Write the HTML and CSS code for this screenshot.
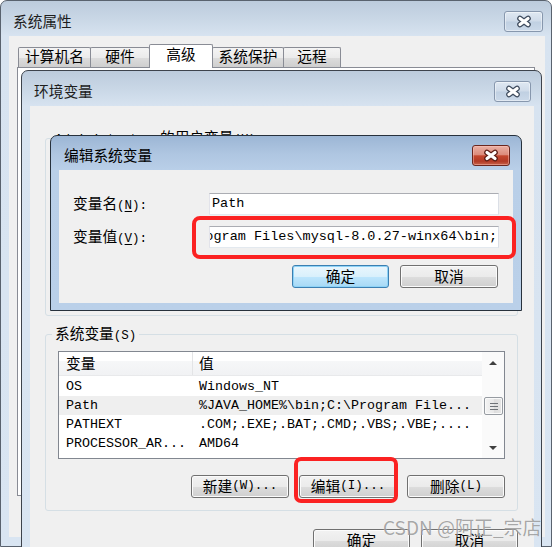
FILE: index.html
```html
<!DOCTYPE html>
<html lang="zh-CN">
<head>
<meta charset="utf-8">
<title>系统属性</title>
<link rel="stylesheet" href="styles.css">
</head>
<body>
<section class="win inactive outer">
  <header class="titlebar">
    <span class="title">系统属性</span>
    <span class="close w39"><svg width="16" height="13" viewBox="0 0 16 13"><path d="M4 3.5 L12 9.5 M12 3.5 L4 9.5" stroke="#3d4a5c" stroke-width="5.6" stroke-linecap="round" fill="none"/><path d="M4 3.5 L12 9.5 M12 3.5 L4 9.5" stroke="#fff" stroke-width="3.2" stroke-linecap="round" fill="none"/></svg></span>
  </header>
  <div class="client outer-client">
    <nav class="tabs">
      <span class="tab t1">计算机名</span>
      <span class="tab t2">硬件</span>
      <span class="tab sel t3">高级</span>
      <span class="tab t4">系统保护</span>
      <span class="tab t5">远程</span>
    </nav>
    <div class="tabpage"></div>
  </div>
</section>

<section class="win inactive env">
  <header class="titlebar">
    <span class="title">环境变量</span>
    <span class="close w37"><svg width="16" height="13" viewBox="0 0 16 13"><path d="M4 3.5 L12 9.5 M12 3.5 L4 9.5" stroke="#3d4a5c" stroke-width="5.6" stroke-linecap="round" fill="none"/><path d="M4 3.5 L12 9.5 M12 3.5 L4 9.5" stroke="#fff" stroke-width="3.2" stroke-linecap="round" fill="none"/></svg></span>
  </header>
  <div class="client env-client">
    <fieldset class="group user">
      <legend><span class="m">Administrator </span>的用户变量<span class="m">(U)</span></legend>
    </fieldset>
    <fieldset class="group sys">
      <legend>系统变量<span class="m">(S)</span></legend>
      <div class="listview">
        <div class="lv-main">
          <div class="lv-head"><span class="c1">变量</span><span class="c2">值</span></div>
          <div class="lv-row"><span class="c1">OS</span><span class="c2">Windows_NT</span></div>
          <div class="lv-row alt"><span class="c1">Path</span><span class="c2">%JAVA_HOME%\bin;C:\Program File...</span></div>
          <div class="lv-row"><span class="c1">PATHEXT</span><span class="c2">.COM;.EXE;.BAT;.CMD;.VBS;.VBE;....</span></div>
          <div class="lv-row"><span class="c1">PROCESSOR_AR...</span><span class="c2">AMD64</span></div>
        </div>
        <div class="sb">
          <div class="sb-btn"><span class="arr up"></span></div>
          <div class="sb-thumb"><svg width="8" height="7" viewBox="0 0 8 7"><path d="M0 0.5 H8 M0 3.5 H8 M0 6.5 H8" stroke="#6f7378" stroke-width="1"/></svg></div>
          <div class="sb-fill"></div>
          <div class="sb-btn"><span class="arr down"></span></div>
        </div>
      </div>
      <div class="grp-btns">
        <button class="btn w98">新建<span class="m">(W)...</span></button>
        <button class="btn w98">编辑<span class="m">(I)...</span></button>
        <button class="btn w98">删除<span class="m">(L)</span></button>
      </div>
    </fieldset>
    <div class="env-btns">
      <button class="btn w97">确定</button>
      <button class="btn w97">取消</button>
    </div>
  </div>
  <div class="mark mark-edit"></div>
</section>

<section class="win active edit">
  <header class="titlebar">
    <span class="title">编辑系统变量</span>
    <span class="close red w38"><svg width="16" height="13" viewBox="0 0 16 13"><path d="M4 3.5 L12 9.5 M12 3.5 L4 9.5" stroke="#5b1d15" stroke-width="5.6" stroke-linecap="round" fill="none"/><path d="M4 3.5 L12 9.5 M12 3.5 L4 9.5" stroke="#fff" stroke-width="3.2" stroke-linecap="round" fill="none"/></svg></span>
  </header>
  <div class="client edit-client">
    <div class="form">
      <label class="lbl">变量名<span class="m">(<u>N</u>):</span></label>
      <div class="field">Path</div>
      <label class="lbl">变量值<span class="m">(<u>V</u>):</span></label>
      <div class="field val"><span>%JAVA_HOME%\bin;C:\Program Files\mysql-8.0.27-winx64\bin;</span></div>
    </div>
    <div class="edit-btns">
      <button class="btn def w97">确定</button>
      <button class="btn w98">取消</button>
    </div>
  </div>
  <div class="mark mark-val"></div>
</section>

<div class="watermark">CSDN @阿正_宗店</div>
</body>
</html>
```
FILE: styles.css
```css
* { box-sizing: border-box; }
html, body { margin: 0; padding: 0; }
body {
  position: relative;
  width: 554px;
  height: 547px;
  overflow: hidden;
  background: #fff;
  font-family: "Noto Sans CJK SC", "Liberation Sans", sans-serif;
  font-size: 14.7px;
  line-height: 1;
  color: #000;
}
.m {
  font-family: "Liberation Mono", "Noto Sans CJK SC", monospace;
  font-size: 12.5px;
}
u { text-decoration: underline; text-underline-offset: 2px; }

/* windows */
.win {
  position: absolute;
  display: flex;
  flex-direction: column;
  border: 1px solid #59626e;
  border-radius: 7px 7px 0 0;
}
.inactive {
  background: linear-gradient(180deg, #bccbdc 0, #c9d7e6 18px, #d7e3f0 35px, #d9e5f2 100%);
}
.active {
  background: linear-gradient(180deg, #9cb6d5 0, #afc6e1 18px, #b9cfe8 34px, #bad0e9 100%);
  border-color: #27313c;
}
.outer { left: 0; top: 0; width: 552px; height: 547px; padding: 0 6px 9px 8px; }
.env { left: 21px; top: 70px; width: 521px; height: 490px; padding: 0 7px 0 8px; border-color: #3d434c; }
.edit { left: 50px; top: 135px; width: 472px; height: 176px; padding: 0 8px 7px 8px; }

.titlebar {
  flex: none;
  display: flex;
  align-items: center;
  justify-content: space-between;
}
.outer .titlebar, .env .titlebar { height: 35px; padding-top: 6px; }
.edit .titlebar { height: 34px; padding-top: 5px; }
.title { color: #1d1d1d; margin-left: 4px; }
.edit .title { margin-left: 5px; color: #000; }

.close {
  height: 21px;
  border: 1px solid #8797ad;
  border-radius: 3px;
  background: linear-gradient(180deg, #dfe8f2 0, #cfdbe9 48%, #c0d0e2 52%, #cbd9e9 100%);
  box-shadow: inset 0 0 0 1px rgba(255,255,255,0.45);
  display: flex;
  align-items: center;
  justify-content: center;
}
.outer .close { margin-right: 2px; }
.env .close, .edit .close { margin-right: 3px; }
.close.red {
  border-color: #6a271f;
  background: linear-gradient(180deg, #eab0a4 0, #dc8c7c 45%, #c4472f 52%, #b23a25 80%, #c7634b 100%);
  box-shadow: inset 0 0 0 1px rgba(255,200,190,0.45);
}
.w39 { width: 39px; }
.w38 { width: 38px; }
.w37 { width: 37px; }

.client { flex: 1; min-height: 0; background: #f0f0f0; }

/* tabs */
.outer-client { padding: 8px 10px 0 8px; }
.tabs {
  display: flex;
  align-items: flex-end;
  height: 24px;
  margin: 0 0 -1px 1px;
  position: relative;
  z-index: 1;
}
.tab {
  height: 20px;
  margin: 0 -1px 1px 0;
  border: 1px solid #898c95;
  border-bottom: 0;
  border-radius: 2px 2px 0 0;
  background: linear-gradient(180deg, #f4f4f4 0, #ebebeb 50%, #dddddd 51%, #cfcfcf 100%);
  display: flex;
  align-items: center;
  justify-content: center;
  padding-bottom: 2px;
  color: #000;
}
.tab.sel {
  height: 24px;
  margin-bottom: 0;
  background: #fff;
  position: relative;
  z-index: 1;
  padding-bottom: 4px;
}
.t1 { width: 73px; }
.t2 { width: 60px; }
.t3 { width: 64px; }
.t4 { width: 72px; }
.t5 { width: 58px; }
.tabpage { height: 429px; border: 1px solid #898c95; background: #fff; }

/* environment window */
.env-client { display: flex; flex-direction: column; padding: 0 16px 0 15px; }
.group {
  margin: 0;
  min-width: 0;
  border: 1px solid #d5dfe5;
  border-radius: 3px;
  padding: 8px 12px 12px 12px;
}
.group legend { padding: 0 3px; margin-left: -6px; line-height: 14px; }
.user { margin-top: 24px; height: 186px; }
.sys { margin-top: 10px; }

.listview {
  display: flex;
  height: 108px;
  border: 1px solid #828790;
  background: #fff;
}
.lv-main { flex: 1; min-width: 0; }
.lv-head {
  display: flex;
  align-items: center;
  height: 24px;
  margin-bottom: 1px;
  background: linear-gradient(180deg, #ffffff 0, #ffffff 38%, #f6f7f8 40%, #f1f2f4 100%);
  border-bottom: 1px solid #e8e9eb;
}
.lv-head .c1 { border-right: 1px solid #e3e4e6; height: 100%; display: flex; align-items: center; }
.c1 { width: 134px; flex: none; padding-left: 7px; }
.c2 { padding-left: 6px; white-space: nowrap; }
.lv-row {
  display: flex;
  align-items: center;
  height: 19px;
  font-family: "Liberation Mono", monospace;
  font-size: 13.33px;
  white-space: nowrap;
}
.lv-row.alt { background: #efefef; }

.sb { width: 22px; flex: none; display: flex; flex-direction: column; align-items: center; background: #fafafa; }
.sb-btn { height: 21px; width: 100%; display: flex; align-items: center; justify-content: center; }
.arr { width: 0; height: 0; border-left: 4px solid transparent; border-right: 4px solid transparent; }
.arr.up { border-bottom: 4px solid #404040; margin-top: 1px; }
.arr.down { border-top: 4px solid #404040; }
.sb-thumb {
  margin-top: 24px;
  width: 19px;
  height: 18px;
  margin-left: 1px;
  border: 1px solid #979ca2;
  border-radius: 2px;
  background: linear-gradient(90deg, #f4f4f4, #e8e8e8 50%, #dcdcdc 51%, #e6e6e6);
  box-shadow: inset 0 0 0 1px #fafafa;
  display: flex;
  align-items: center;
  justify-content: center;
}
.sb-fill { flex: 1; }

.grp-btns { display: flex; justify-content: flex-end; gap: 10px; margin-top: 16px; }
.env-btns { display: flex; justify-content: flex-end; gap: 11px; margin-top: 18px; }

/* buttons */
.btn {
  height: 23px;
  padding: 0;
  border: 1px solid #707070;
  border-radius: 3px;
  background: linear-gradient(180deg, #f2f2f2 0, #ebebeb 50%, #dddddd 51%, #cfcfcf 100%);
  box-shadow: inset 0 0 0 1px #fbfbfb;
  display: flex;
  align-items: center;
  justify-content: center;
  font-family: "Noto Sans CJK SC", sans-serif;
  font-size: 14.7px;
  line-height: 1;
  color: #000;
}
.btn.def {
  border-color: #3c7fb1;
  background: linear-gradient(180deg, #eaf6fd 0, #d9f0fc 50%, #bee6fd 51%, #a7d9f5 100%);
  box-shadow: inset 0 0 0 1px #8ed3f7;
}
.w98 { width: 98px; }
.w97 { width: 97px; }

/* edit dialog */
.edit-client { padding: 23px 14px 0 14px; }
.form { display: grid; grid-template-columns: 136px 1fr; row-gap: 11px; align-items: center; }
.lbl { white-space: nowrap; }
.field {
  height: 22px;
  border: 1px solid;
  border-color: #abadb3 #dbdfe6 #e3e9ef #e2e3ea;
  background: #fff;
  display: flex;
  align-items: center;
  overflow: hidden;
  white-space: nowrap;
  padding: 0 1px 0 2px;
  font-family: "Liberation Mono", monospace;
  font-size: 13.5px;
}
.field.val { justify-content: flex-end; }
.field.val span { flex: none; }
.edit-btns { display: flex; justify-content: flex-end; gap: 11px; margin-top: 17px; padding-right: 1px; }

/* annotations */
.mark {
  position: absolute;
  border: 4px solid #fb2222;
  border-radius: 8px;
  pointer-events: none;
}
.mark-val { left: 141px; top: 80px; width: 324px; height: 43px; }
.mark-edit { left: 272px; top: 386px; width: 104px; height: 46px; border-radius: 7px; }

.watermark {
  position: absolute;
  left: 383px;
  top: 517px;
  font-family: "Noto Sans CJK SC", sans-serif;
  font-size: 19px;
  line-height: 1;
  color: rgba(95, 95, 95, 0.55);
  text-shadow: 0 0 1px rgba(255,255,255,0.8);
  white-space: nowrap;
}
```
